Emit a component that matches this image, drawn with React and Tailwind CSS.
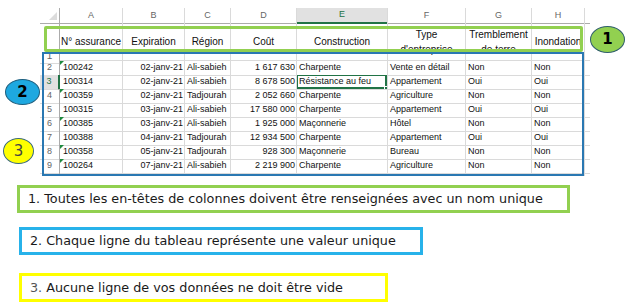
import React from 'react';

const COLS = ['A', 'B', 'C', 'D', 'E', 'F', 'G', 'H'];

const HEADERS = ['N° assurance', 'Expiration', 'Région', 'Coût', 'Construction', "Type\nd'entreprise", 'Tremblement\nde terre', 'Inondation'];

const ROWS = [
    ['100242', '02-janv-21', 'Ali-sabieh', '1 617 630', 'Charpente', 'Vente en détail', 'Non', 'Non', true],
    ['100314', '02-janv-21', 'Ali-sabieh', '8 678 500', 'Résistance au feu', 'Appartement', 'Oui', 'Oui', false],
    ['100359', '02-janv-21', 'Tadjourah', '2 052 660', 'Charpente', 'Agriculture', 'Non', 'Non', true],
    ['100315', '03-janv-21', 'Ali-sabieh', '17 580 000', 'Charpente', 'Appartement', 'Oui', 'Oui', false],
    ['100385', '03-janv-21', 'Ali-sabieh', '1 925 000', 'Maçonnerie', 'Hôtel', 'Non', 'Non', true],
    ['100388', '04-janv-21', 'Tadjourah', '12 934 500', 'Charpente', 'Appartement', 'Oui', 'Oui', false],
    ['100358', '05-janv-21', 'Tadjourah', '928 300', 'Maçonnerie', 'Bureau', 'Non', 'Non', true],
    ['100264', '07-janv-21', 'Ali-sabieh', '2 219 900', 'Charpente', 'Agriculture', 'Non', 'Non', true],
];

const grid = 'grid grid-cols-[20px_63px_62px_46px_66px_91px_78px_66px_53px_5px]';
const cell = 'border-r border-b border-[#dadada] overflow-hidden whitespace-nowrap';

const Sheet = () => (
    <div className="ml-10 mt-2 w-[550px] h-[168px] overflow-hidden text-[9px] text-[#111] font-['Liberation_Sans',Arial,sans-serif]">
        {/* column letters */}
        <div className={`${grid} h-[14px]`}>
            <div className="relative border-r border-b border-[#ababab]">
                <div className="absolute right-[2px] bottom-[3px] w-0 h-0 border-l-[8px] border-l-transparent border-b-[8px] border-b-[#dcdcdc]" />
            </div>
            {COLS.map((c) => (
                <div
                    key={c}
                    className={`flex items-center justify-center border-r border-[#dadada] text-[#666] ${c === 'E' ? 'bg-[#e1e1e1] border-b-2 border-b-[#217346] text-[#217346]' : 'border-b border-b-[#ababab]'}`}
                >
                    {c}
                </div>
            ))}
            <div className="border-b border-[#ababab]" />
        </div>

        {/* row 1: headers */}
        <div className={`${grid} h-[39px] text-[10px]`}>
            <div className="flex items-end justify-center -mb-[3px] border-r border-r-[#ababab] border-b border-b-[#dadada] text-[#666]">1</div>
            {HEADERS.map((h, i) => (
                <div key={i} className={`${cell} flex items-center justify-center text-center leading-[15px] whitespace-pre pt-[1px]`}>
                    {h}
                </div>
            ))}
            <div className="border-b border-[#dadada]" />
        </div>

        {/* data rows */}
        {ROWS.map((r, i) => {
            const n = i + 2;
            const sel = n === 3;
            return (
                <div key={n} className={`${grid} h-[14px]`}>
                    <div className={`flex items-center justify-center border-b border-[#dadada] ${sel ? 'bg-[#e1e1e1] border-r-2 border-r-[#217346] text-[#217346]' : 'border-r border-r-[#ababab] text-[#666]'}`}>
                        {n}
                    </div>
                    <div className={`${cell} relative flex items-center pl-[3px]`}>
                        {r[8] && <div className="absolute left-0 top-0 w-0 h-0 border-t-[4px] border-t-[#1e8a3e] border-r-[4px] border-r-transparent" />}
                        {r[0]}
                    </div>
                    <div className={`${cell} flex items-center justify-end pr-[1px]`}>{r[1]}</div>
                    <div className={`${cell} flex items-center pl-[2px]`}>{r[2]}</div>
                    <div className={`${cell} flex items-center justify-end pr-[1px]`}>{r[3]}</div>
                    <div className={`${cell} relative flex items-center pl-[2px]`}>
                        {sel && (
                            <div className="absolute -left-px -top-px right-0 bottom-0 border-2 border-[#217346]">
                                <div className="absolute -right-[3px] -bottom-[3px] w-[4px] h-[4px] bg-[#217346] border border-white" />
                            </div>
                        )}
                        {r[4]}
                    </div>
                    <div className={`${cell} flex items-center pl-[2px]`}>{r[5]}</div>
                    <div className={`${cell} flex items-center pl-[2px]`}>{r[6]}</div>
                    <div className={`${cell} flex items-center pl-[2px]`}>{r[7]}</div>
                    <div className="border-b border-[#dadada]" />
                </div>
            );
        })}

        {/* row 10, cut off */}
        <div className={`${grid} h-[14px]`}>
            <div className="border-r border-[#ababab]" />
            {COLS.map((c) => (
                <div key={c} className="border-r border-[#dadada]" />
            ))}
            <div />
        </div>
    </div>
);

const Rule = ({ border, className, children }) => (
    <div className={`h-[28px] flex items-center pl-[8px] border-[3px] whitespace-nowrap ${border} ${className}`}>
        {children}
    </div>
);

export default function App() {
    return (
        <div className="relative w-[630px] h-[306px] bg-white overflow-hidden">
            <Sheet />

            {/* annotations over the sheet */}
            <div className="absolute left-[44px] top-[26px] w-[539px] h-[26px] border-[3px] border-[#92d050] rounded-[2px]" />
            <div className="absolute left-[42px] top-[52px] w-[542px] h-[124px] border-2 border-[#2a78b2]" />

            <div className="absolute left-[590px] top-[26px] w-[35px] h-[27px] rounded-[50%] bg-[#92d050] border-[1.5px] border-[#2f5e6c] flex items-center justify-center text-[15px] font-bold text-black font-['DejaVu_Sans',sans-serif]">1</div>
            <div className="absolute left-[5px] top-[79px] w-[35px] h-[26px] rounded-[50%] bg-[#1ea8e0] border-[1.5px] border-[#1d5e7e] flex items-center justify-center text-[15px] font-bold text-black font-['DejaVu_Sans',sans-serif]">2</div>
            <div className="absolute left-[3px] top-[138px] w-[31px] h-[26px] rounded-[50%] bg-[#ffff00] border-[1.5px] border-[#3b6b7b] flex items-center justify-center text-[15px] text-[#444] font-['DejaVu_Sans',sans-serif]">3</div>

            {/* rules */}
            <div className="flex flex-col items-start text-[12.75px] text-[#1a1a1a] font-['DejaVu_Sans',sans-serif]">
                <Rule border="border-[#92d050]" className="ml-[17px] mt-[9px] w-[553px]">
                    1. Toutes les en-têtes de colonnes doivent être renseignées avec un nom unique
                </Rule>
                <Rule border="border-[#27b2ea]" className="ml-[19px] mt-[14px] w-[404px]">
                    2. Chaque ligne du tableau représente une valeur unique
                </Rule>
                <Rule border="border-[#ffff00]" className="ml-[19px] mt-[18px] w-[369px] h-[29px]">
                    <span className="text-[#555]">3.</span>&nbsp;Aucune ligne de vos données ne doit être vide
                </Rule>
            </div>
        </div>
    );
}
